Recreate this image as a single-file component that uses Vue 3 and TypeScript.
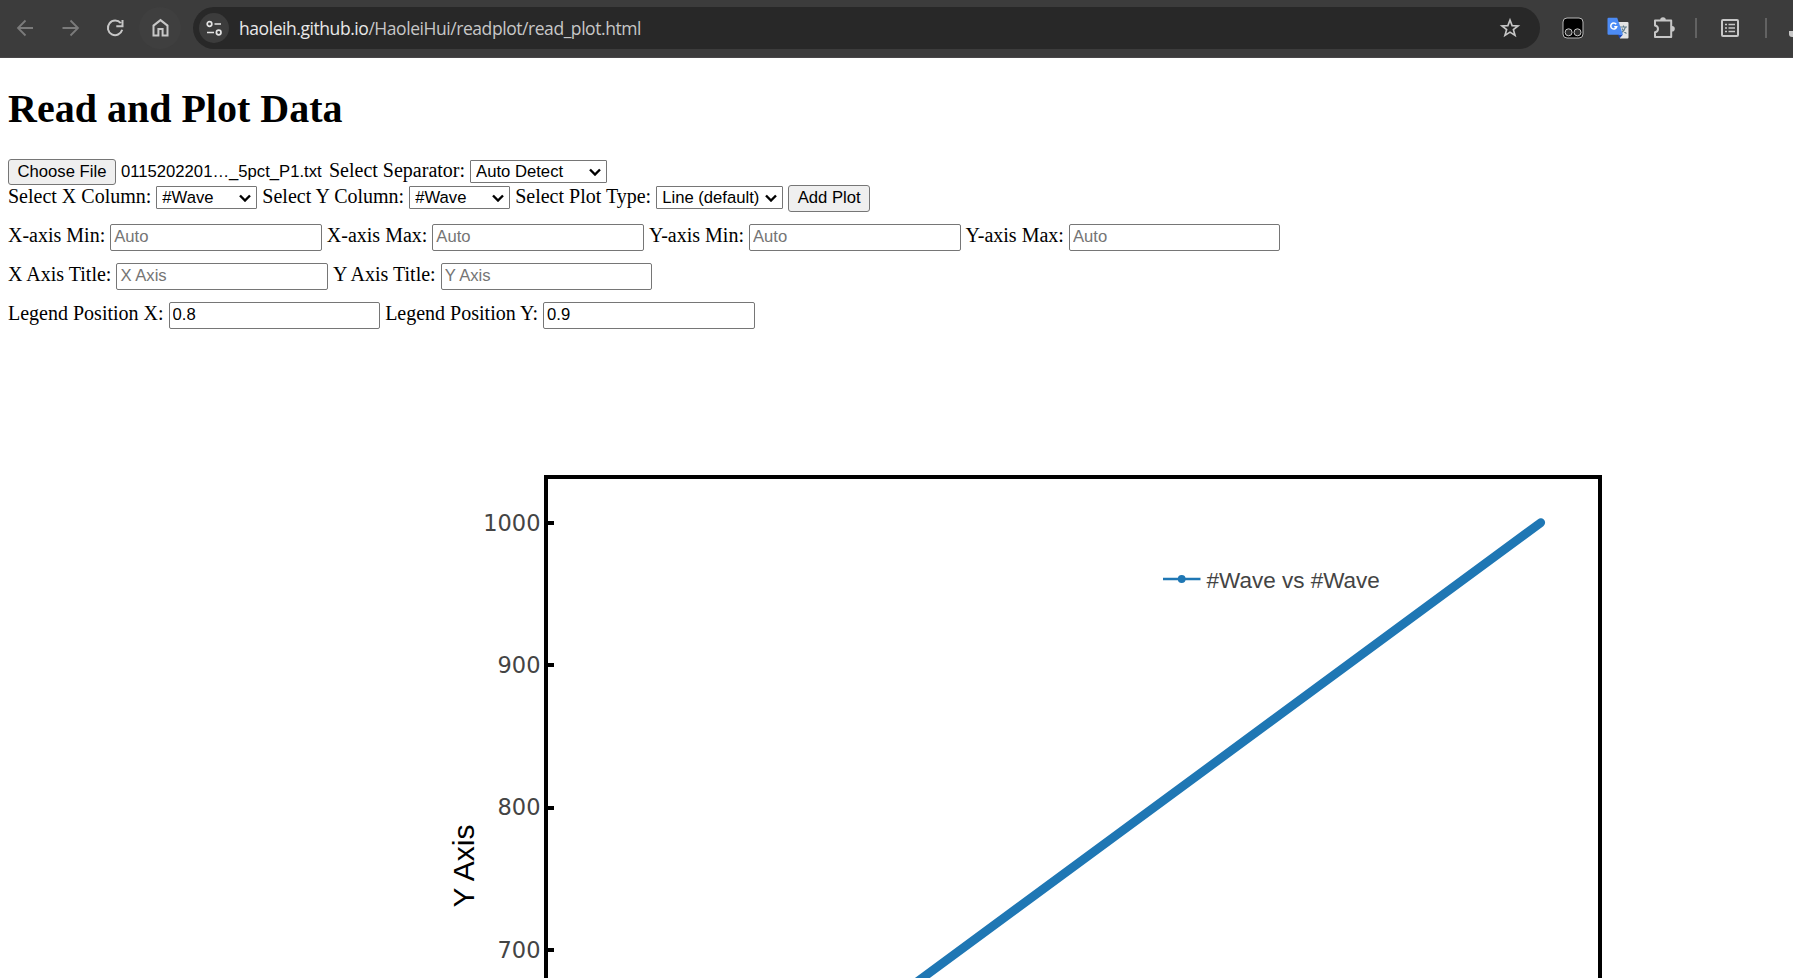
<script setup lang="ts">
import { ref } from 'vue'

interface Field {
  label: string
  placeholder?: string
  value?: string
}

const separator = ref('Auto Detect')
const xColumn = ref('#Wave')
const yColumn = ref('#Wave')
const plotType = ref('Line (default)')

const fieldRows: Field[][] = [
  [
    { label: 'X-axis Min:', placeholder: 'Auto' },
    { label: 'X-axis Max:', placeholder: 'Auto' },
    { label: 'Y-axis Min:', placeholder: 'Auto' },
    { label: 'Y-axis Max:', placeholder: 'Auto' },
  ],
  [
    { label: 'X Axis Title:', placeholder: 'X Axis' },
    { label: 'Y Axis Title:', placeholder: 'Y Axis' },
  ],
  [
    { label: 'Legend Position X:', value: '0.8' },
    { label: 'Legend Position Y:', value: '0.9' },
  ],
]

const ticks = [1000, 900, 800, 700].map((value, i) => ({ value, y: 194 + i * 142.3 }))
</script>

<template>
  <div class="window">
    <header class="toolbar">
      <nav class="nav">
        <svg class="nav-icon dim" viewBox="0 0 42 42"><path d="M29 21H14.500M21.500 13.500 14 21l7.500 7.500" /></svg>
        <svg class="nav-icon dim" viewBox="0 0 42 42"><path d="M13.500 21h15M21.500 13.500 29 21 21.500 28.500" /></svg>
        <svg class="nav-icon" viewBox="0 0 42 42"><path d="M26.800 16.200A7.300 7.300 0 1 0 28.200 22.800M28.500 13v6.200h-6.200" /></svg>
        <svg class="nav-icon home" viewBox="0 0 42 42"><path d="M14.500 28.500V18.600l7-5.500 7 5.500v9.900h-4.900v-6.600h-4.200v6.600z" /></svg>
      </nav>
      <div class="omnibox">
        <svg class="site-info" viewBox="0 0 30 30">
          <circle cx="10.500" cy="11" r="2.300" /><path d="M15.500 11H22" />
          <circle cx="19.700" cy="19.500" r="2.300" /><path d="M8 19.500h7" />
        </svg>
        <div class="url"><span>haoleih.github.io</span>/HaoleiHui/readplot/read_plot.html</div>
        <svg class="star" viewBox="0 0 24 24"><path d="m12 3.300 2.300 6.100 6.500.3-5.100 4.100 1.800 6.300-5.500-3.600-5.500 3.600 1.800-6.300-5.100-4.100 6.500-.3z" /></svg>
      </div>
      <div class="extensions">
        <svg class="ext" viewBox="0 0 22 22">
          <rect x="1" y="1" width="20" height="20" rx="4" fill="#000" stroke="#b8b8b8" />
          <circle cx="6.600" cy="15.300" r="3.500" fill="#303030" stroke="#c8c8c8" />
          <circle cx="15.500" cy="15.300" r="3.500" fill="#303030" stroke="#c8c8c8" />
        </svg>
        <svg class="ext translate" viewBox="0 0 22 22">
          <path d="M10 5h10.500q1 0 1 1v14.500q0 1-1 1H13z" fill="#e4e4e4" />
          <path d="M13 10h7M16.500 8.500V10M18.500 10q-1 4-4.500 6M15 11.500q1 3 4.500 5" fill="none" stroke="#607d8b" stroke-width="1.100" />
          <path d="m11 17.500 5 0-3.500 4z" fill="#1a46b8" />
          <path d="M1.500.7h8.700l5.800 17H1.500q-1 0-1-1v-15q0-1 1-1z" fill="#4c8bf5" />
          <path d="M9.200 7.200a3 3 0 1 0 .5 2.500H7.200" fill="none" stroke="#fff" stroke-width="1.500" />
        </svg>
        <svg class="ext puzzle" viewBox="0 0 22 22">
          <path d="M2 3.500h16.200v16.500H2v-4.800q3-.6 3-3.300T2 8.500z" fill="none" stroke="#c7c7c7" stroke-width="2" stroke-linejoin="round" />
          <path d="M7.200 3a2.800 2.800 0 0 1 5.600 0zM19 8.900a2.800 2.800 0 0 1 0 5.600z" fill="#c7c7c7" />
        </svg>
        <i class="divider"></i>
        <svg class="ext list" viewBox="0 0 22 22">
          <rect x="3" y="3" width="16" height="16" rx="1" fill="none" stroke="#c7c7c7" stroke-width="2" />
          <path d="M6 7.500h2M9.500 7.500H16M6 11h2M9.500 11H16M6 14.500h2M9.500 14.500H16" stroke="#c7c7c7" stroke-width="1.700" />
        </svg>
        <i class="divider last"></i>
        <i class="clipped"></i>
      </div>
    </header>

    <main class="page">
      <h1>Read and Plot Data</h1>

      <div class="row file-row">
        <button class="btn file-btn">Choose File</button>
        <span class="file-name">0115202201…_5pct_P1.txt</span>
        <label>Select Separator:</label>
        <span class="select separator">
          <select v-model="separator"><option>Auto Detect</option></select>
          <svg viewBox="0 0 12 8"><path d="m1 1.500 5 5 5-5" /></svg>
        </span>
      </div>

      <div class="row">
        <label>Select X Column:</label>
        <span class="select column">
          <select v-model="xColumn"><option>#Wave</option></select>
          <svg viewBox="0 0 12 8"><path d="m1 1.500 5 5 5-5" /></svg>
        </span>
        <label>Select Y Column:</label>
        <span class="select column">
          <select v-model="yColumn"><option>#Wave</option></select>
          <svg viewBox="0 0 12 8"><path d="m1 1.500 5 5 5-5" /></svg>
        </span>
        <label>Select Plot Type:</label>
        <span class="select type">
          <select v-model="plotType"><option>Line (default)</option></select>
          <svg viewBox="0 0 12 8"><path d="m1 1.500 5 5 5-5" /></svg>
        </span>
        <button class="btn add-btn">Add Plot</button>
      </div>

      <div class="field-rows">
        <div v-for="(row, r) in fieldRows" :key="r" class="row fields">
          <template v-for="field in row" :key="field.label">
            <label>{{ field.label }}</label>
            <input type="text" :placeholder="field.placeholder" :value="field.value" />
          </template>
        </div>
      </div>
    </main>

    <svg class="plot" width="1793" height="649" viewBox="0 0 1793 649">
      <path class="trace" d="M1540.700 193.700 863 692.700" />
      <rect class="frame" x="546" y="148" width="1054" height="700" />
      <g v-for="tick in ticks" :key="tick.value">
        <rect x="548" :y="Math.round(tick.y) - 2" width="6" height="4" />
        <text class="tick" x="540.500" :y="tick.y + 7.600">{{ tick.value }}</text>
      </g>
      <text class="axis-title" transform="translate(474 537) rotate(-90)">Y Axis</text>
      <path class="legend-line" d="M1163 250h37.500" />
      <circle class="legend-dot" cx="1181.700" cy="250" r="3.900" />
      <text class="legend" x="1206.500" y="258.500">#Wave vs #Wave</text>
    </svg>
  </div>
</template>

<style>
body {
  background: #fff;
  overflow: hidden;
}
</style>

<style scoped>
.window {
  width: 1793px;
  height: 978px;
  overflow: hidden;
  display: flex;
  flex-direction: column;
  background: #fff;
  color: #000;
}
.toolbar {
  box-sizing: border-box;
  flex: none;
  height: 58px;
  padding: 0 0 1px 4px;
  display: flex;
  align-items: center;
  background: #3c3c3c;
  border-bottom: 1px solid #484648;
  overflow: hidden;
}
.nav {
  display: flex;
  gap: 3px;
  margin-right: 12px;
}
.nav-icon {
  width: 42px;
  height: 42px;
  fill: none;
  stroke: #c7c7c7;
  stroke-width: 2;
}
.nav-icon.dim {
  stroke: #7b7b7b;
  stroke-width: 1.8;
}
.nav-icon.home {
  border-radius: 50%;
  background: #3f3f3f;
}
.omnibox {
  box-sizing: border-box;
  flex: none;
  width: 1347px;
  height: 42px;
  padding: 0 19px 0 6px;
  border-radius: 21px;
  display: flex;
  align-items: center;
  background: #282828;
}
.site-info {
  width: 30px;
  height: 30px;
  border-radius: 50%;
  background: #3c3c3c;
  fill: none;
  stroke: #e3e3e3;
  stroke-width: 1.7;
}
.url {
  flex: 1;
  margin-left: 10px;
  font: 17.5px/24px "Open Sans", sans-serif;
  letter-spacing: -0.44px;
  white-space: nowrap;
  color: #c7c7c7;
}
.url span {
  color: #e8e8e8;
}
.star {
  width: 22px;
  height: 22px;
  fill: none;
  stroke: #c7c7c7;
  stroke-width: 1.8;
}
.extensions {
  display: flex;
  align-items: center;
  margin-left: 22px;
}
.ext {
  flex: none;
  width: 22px;
  height: 22px;
}
.translate {
  margin-left: 23px;
}
.puzzle {
  margin-left: 24px;
}
.divider {
  flex: none;
  width: 2px;
  height: 20px;
  margin: 0 22px 0 20px;
  background: #626262;
}
.divider.last {
  margin: 0 22px 0 24px;
}
.clipped {
  flex: none;
  width: 12px;
  height: 6px;
  margin-top: 12px;
  border-radius: 0 0 0 3px;
  background: #c7c7c7;
}
.page {
  flex: none;
  height: 271px;
  padding-left: 8px;
  font: 20px/23px "Liberation Serif", "Times New Roman", serif;
}
h1 {
  margin: 28px 0 27px;
  font-size: 40px;
  line-height: 46px;
}
.row {
  height: 26px;
  display: flex;
  align-items: flex-start;
  gap: 5px;
  white-space: nowrap;
}
.row label {
  line-height: 22px;
}
.btn {
  box-sizing: border-box;
  height: 26px;
  padding: 0;
  border: 1px solid #767676;
  border-radius: 3px;
  background: #efefef;
  color: #000;
  font: 16.667px/22px "Liberation Sans", Arial, sans-serif;
}
.file-btn {
  width: 108px;
}
.add-btn {
  width: 82px;
  height: 27px;
  padding-bottom: 2px;
}
.file-name {
  width: 203px;
  font: 16.667px/25px "Liberation Sans", Arial, sans-serif;
}
.select {
  position: relative;
  height: 23px;
  margin-top: 1px;
}
.select select {
  appearance: none;
  box-sizing: border-box;
  display: block;
  width: 100%;
  height: 23px;
  padding: 0 0 0 5px;
  border: 1px solid #767676;
  border-radius: 1px;
  background: #fff;
  color: #000;
  font: 16.667px/21px "Liberation Sans", Arial, sans-serif;
}
.select svg {
  position: absolute;
  right: 6px;
  top: 8px;
  width: 12px;
  height: 8px;
  fill: none;
  stroke: #000;
  stroke-width: 2.4;
}
.separator {
  width: 137px;
}
.column {
  width: 101px;
}
.type {
  width: 127px;
}
.field-rows {
  padding-top: 13px;
  display: flex;
  flex-direction: column;
  gap: 12px;
}
.fields {
  height: 27px;
}
.fields input {
  box-sizing: border-box;
  width: 211.6px;
  height: 27px;
  margin: 0;
  padding: 0 0 1px 3px;
  border: 1px solid #767676;
  border-radius: 2px;
  background: #fff;
  color: #000;
  font: 16.667px "Liberation Sans", Arial, sans-serif;
}
.fields input::placeholder {
  color: #757575;
}
.plot {
  flex: none;
  display: block;
}
.trace {
  fill: none;
  stroke: #1f77b4;
  stroke-width: 8.8;
  stroke-linecap: round;
}
.frame {
  fill: none;
  stroke: #000;
  stroke-width: 4;
}
.tick {
  font: 22.5px Verdana, "DejaVu Sans", sans-serif;
  fill: #444;
  text-anchor: end;
}
.axis-title {
  font: 30px "Liberation Sans", Arial, sans-serif;
  text-anchor: middle;
}
.legend {
  font: 22.5px "Liberation Sans", Arial, sans-serif;
  fill: #444;
}
.legend-line {
  stroke: #1f77b4;
  stroke-width: 2.5;
}
.legend-dot {
  fill: #1f77b4;
}
</style>
